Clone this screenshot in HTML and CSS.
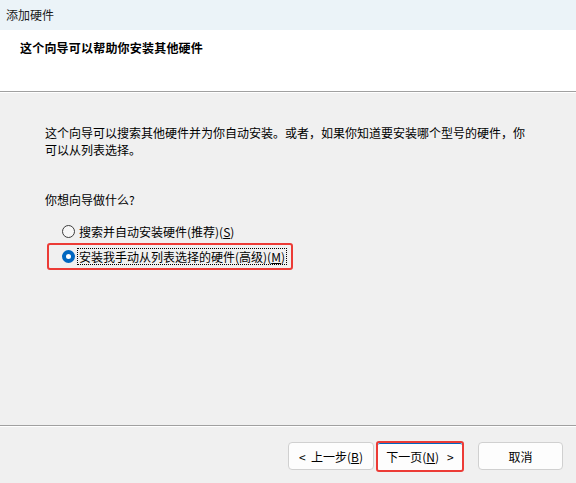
FILE: index.html
```html
<!DOCTYPE html>
<html lang="zh-CN">
<head>
<meta charset="utf-8">
<title>添加硬件</title>
<link rel="stylesheet" href="styles.css">
</head>
<body>
<div class="window">
  <div class="titlebar">添加硬件</div>
  <div class="header">
    <div class="header-title">这个向导可以帮助你安装其他硬件</div>
  </div>
  <div class="content">
    <p class="intro">这个向导可以搜索其他硬件并为你自动安装。或者，如果你知道要安装哪个型号的硬件，你<br>可以从列表选择。</p>
    <p class="question">你想向导做什么?</p>
    <div class="options">
      <div class="option">
        <span class="radio"></span>
        <span class="label">搜索并自动安装硬件(推荐)(<u>S</u>)</span>
      </div>
      <div class="option option-selected">
        <span class="radio radio-checked"></span>
        <span class="label label-focus">安装我手动从列表选择的硬件(高级)(<u>M</u>)</span>
      </div>
    </div>
  </div>
  <div class="footer">
    <button class="btn">&lt;&nbsp; 上一步(<u>B</u>)</button>
    <div class="highlight">
      <button class="btn btn-default">下一页(<u>N</u>)&nbsp;&nbsp; &gt;</button>
    </div>
    <button class="btn btn-cancel">取消</button>
  </div>
</div>
</body>
</html>
```
FILE: styles.css
```css
* { box-sizing: border-box; }
html, body {
  margin: 0;
  padding: 0;
}
body {
  width: 576px;
  height: 483px;
  overflow: hidden;
  background: #f0f0f0;
  font-family: "Noto Sans CJK SC", "Microsoft YaHei", sans-serif;
  font-size: 12px;
  color: #000;
}
.window {
  display: flex;
  flex-direction: column;
  height: 483px;
}
.titlebar {
  height: 30px;
  background: #ebf3f8;
  padding-left: 6px;
  line-height: 30px;
  color: #1a1a1a;
}
.header {
  height: 62px;
  background: #fff;
  border-bottom: 1px solid #a0a0a0;
  box-shadow: 0 1px 0 #fff;
  padding: 9px 0 0 20px;
}
.header-title {
  font-weight: bold;
  line-height: 18px;
  letter-spacing: 0.2px;
}
.content {
  flex: 1;
  padding: 32px 0 0 45px;
  border-bottom: 1px solid #a0a0a0;
}
.intro {
  margin: 0;
  width: 525px;
  line-height: 17px;
  letter-spacing: 0;
}
.question {
  margin: 33px 0 0 0;
  line-height: 17px;
}
.options {
  margin: 12px 0 0 2px;
  display: flex;
  flex-direction: column;
}
.option {
  display: flex;
  align-items: center;
  height: 22px;
  padding-left: 15px;
}
.option-selected {
  width: 246px;
  height: 27px;
  margin-top: 1px;
  padding-left: 13px;
  border: 2px solid #ec3b36;
  border-radius: 3px;
}
.radio {
  width: 13px;
  height: 13px;
  border: 1px solid #3c3c3c;
  border-radius: 50%;
  background: #f7f7f7;
  flex: none;
}
.radio-checked {
  border: 4px solid #0067c0;
  background: #fff;
}
.label {
  margin-left: 2px;
  line-height: 15px;
  padding: 0 1px;
  border: 1px dotted transparent;
}
.label-focus {
  border: 1px dotted #000;
}
.footer {
  height: 57px;
  border-top: 1px solid #fff;
  display: flex;
  justify-content: flex-end;
  align-items: center;
  padding: 2px 13px 0 0;
}
.btn {
  width: 86px;
  height: 28px;
  background: #fdfdfd;
  border: 1px solid #d0d0d0;
  border-radius: 4px;
  font-family: inherit;
  font-size: 12px;
  color: #000;
  padding: 0;
}
.highlight {
  margin-left: 2px;
  border: 2px solid #ec3b36;
  border-radius: 3px;
  display: flex;
}
.btn-default {
  width: 84px;
  height: 27px;
  border: none;
  border-top: 1px solid #0067c0;
  border-radius: 2px;
  background: #fdfdfd;
}
.btn-cancel {
  width: 85px;
  margin-left: 14px;
}
u { text-decoration: underline; }
```
